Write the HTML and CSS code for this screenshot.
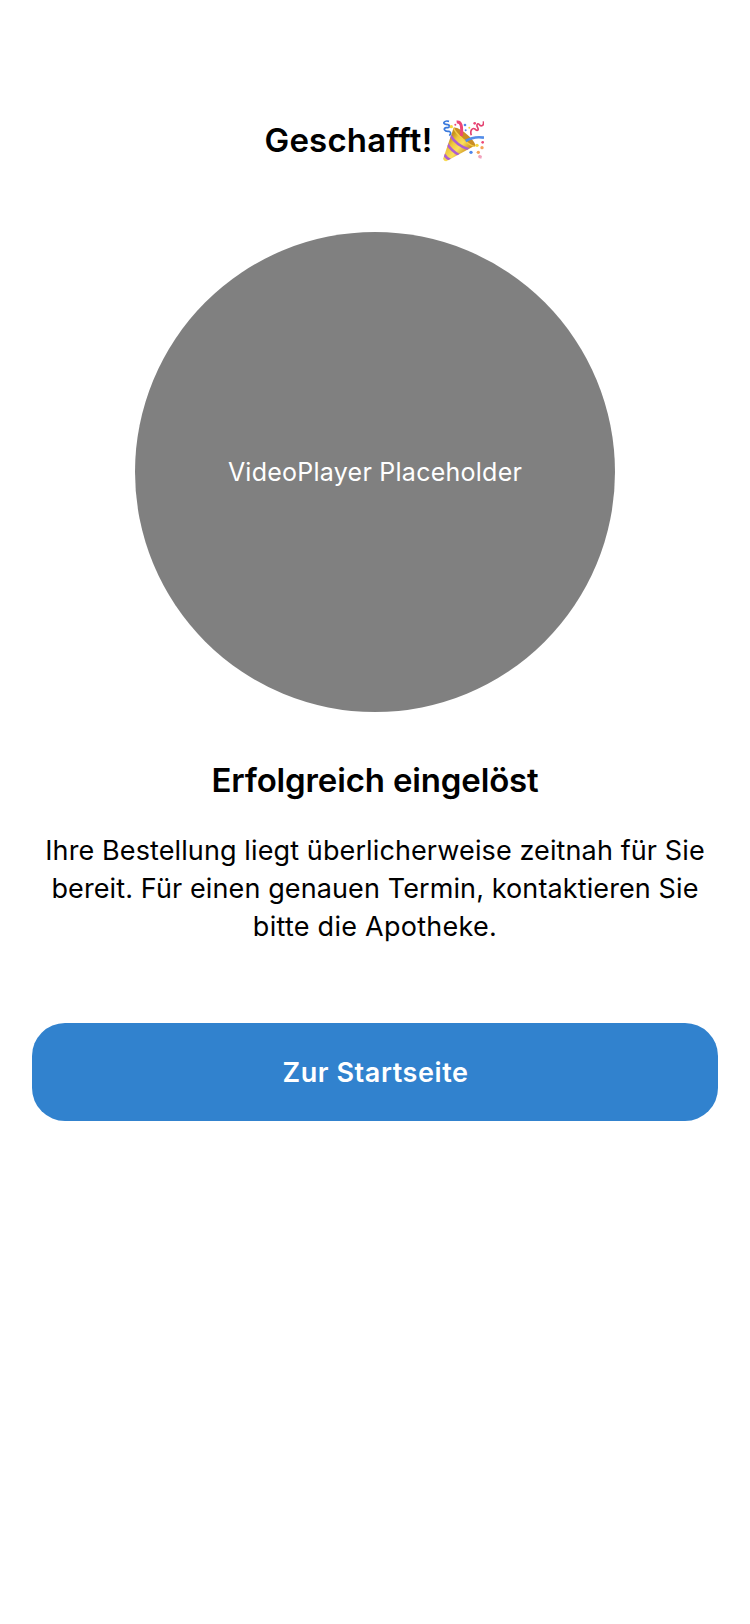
FILE: index.html
```html
<!DOCTYPE html>
<html lang="de">
<head>
<meta charset="utf-8">
<title>Geschafft!</title>
<link rel="stylesheet" href="styles.css">
</head>
<body>
<main class="screen">
  <h1 class="title"><span class="title-text">Geschafft!</span>
    <svg class="party" viewBox="33 28 126 126" aria-hidden="true">
      <defs>
        <linearGradient id="gold" gradientUnits="userSpaceOnUse" x1="50" y1="90" x2="100" y2="132">
          <stop offset="0" stop-color="#c8921f"/>
          <stop offset="0.25" stop-color="#efc63c"/>
          <stop offset="0.6" stop-color="#fbe05c"/>
          <stop offset="1" stop-color="#cf9422"/>
        </linearGradient>
        <clipPath id="cone"><path d="M68 51 L131 105 L46 152 Q36 151 37 143 Z"/></clipPath>
      </defs>
      <path d="M68 51 L131 105 L46 152 Q36 151 37 143 Z" fill="url(#gold)"/>
      <g clip-path="url(#cone)" fill="none" stroke="#ad5fd0" stroke-width="8">
        <path d="M58 74 Q76 104 113 116"/>
        <path d="M48 99 Q61 121 86 134"/>
        <path d="M38 130 Q46 143 60 149"/>
      </g>
      <path d="M68 51 C84 47 137 91 133 107 C123 110 73 66 68 51Z" fill="#c98d25"/>
      <path d="M68 52 C72 67 116 107 131 107" fill="none" stroke="#f5cf48" stroke-width="4"/>
      <path d="M77 34 C91 32 94 47 91 76" fill="none" stroke="#ed4777" stroke-width="9"/>
      <path d="M104 91 Q128 76 159 81" fill="none" stroke="#548de8" stroke-width="8"/>
      <path d="M54 32 C39 28 33 40 45 41 C59 42 58 51 46 51 C35 52 40 64 54 62 C61 65 60 70 55 75" fill="none" stroke="#3979dd" stroke-width="5"/>
      <path d="M157 32 C160 45 150 50 144 41 C140 36 135 43 140 51 C145 60 137 62 132 55 C124 50 116 60 121 74" fill="none" stroke="#e34270" stroke-width="5"/>
      <g fill="#ed4777"><circle cx="131" cy="38" r="4"/><circle cx="155" cy="95" r="4"/><circle cx="73" cy="42" r="3"/></g>
      <g fill="#4d86ec"><circle cx="102" cy="43" r="4"/><circle cx="104" cy="59" r="3"/><circle cx="120" cy="125" r="5"/></g>
      <g fill="#f5d63c"><circle cx="61" cy="48" r="5"/><circle cx="115" cy="51" r="3"/><circle cx="138" cy="104" r="5"/></g>
      <g fill="#f5a258"><circle cx="153" cy="111" r="5"/><circle cx="142" cy="125" r="5"/></g>
      <path d="M146 132l7 4-2 8-8-2-2-6z" fill="#f2a2bd"/>
    </svg>
  </h1>
  <div class="player"><span class="player-label">VideoPlayer Placeholder</span></div>
  <h2 class="subtitle">Erfolgreich eingelöst</h2>
  <p class="message"><span class="line">Ihre Bestellung liegt überlicherweise zeitnah für Sie</span> <span class="line">bereit. Für einen genauen Termin, kontaktieren Sie</span> <span class="line line-last">bitte die Apotheke.</span></p>
  <button class="action">Zur Startseite</button>
</main>
</body>
</html>
```
FILE: styles.css
```css
body {
  margin: 0;
  background: #fff;
  color: #000;
  font-family: Inter, "Liberation Sans", sans-serif;
}
.screen {
  box-sizing: border-box;
  min-height: 1624px;
  padding: 119px 32px 0;
  display: flex;
  flex-direction: column;
  align-items: center;
}
.title {
  margin: 0;
  padding-right: 2px;
  height: 43px;
  display: flex;
  align-items: flex-start;
  gap: 9px;
  font-size: 33px;
  line-height: 42px;
  font-weight: 600;
}
.title-text { letter-spacing: 0.2px; }
.party { width: 42px; height: 42px; margin-top: 1px; }
.player {
  width: 480px;
  height: 480px;
  margin-top: 70px;
  border-radius: 50%;
  background: #808080;
  color: #fff;
  display: flex;
  align-items: center;
  justify-content: center;
}
.player-label { font-size: 25px; letter-spacing: 0.25px; }
.subtitle {
  margin: 47px 0 0;
  font-size: 33px;
  line-height: 42px;
  font-weight: 600;
  letter-spacing: -0.15px;
}
.message {
  margin: 31px 0 0;
  font-size: 27px;
  line-height: 38px;
  text-align: center;
  letter-spacing: 0.11px;
}
.line { display: block; white-space: nowrap; }
.line-last { letter-spacing: 0.27px; }
.action {
  width: 100%;
  height: 98px;
  margin-top: 77px;
  padding: 0 0 0 1px;
  border: 0;
  border-radius: 33px;
  background: #3182ce;
  color: #fff;
  font: 600 27px Inter, "Liberation Sans", sans-serif;
  letter-spacing: 0.58px;
}
```
